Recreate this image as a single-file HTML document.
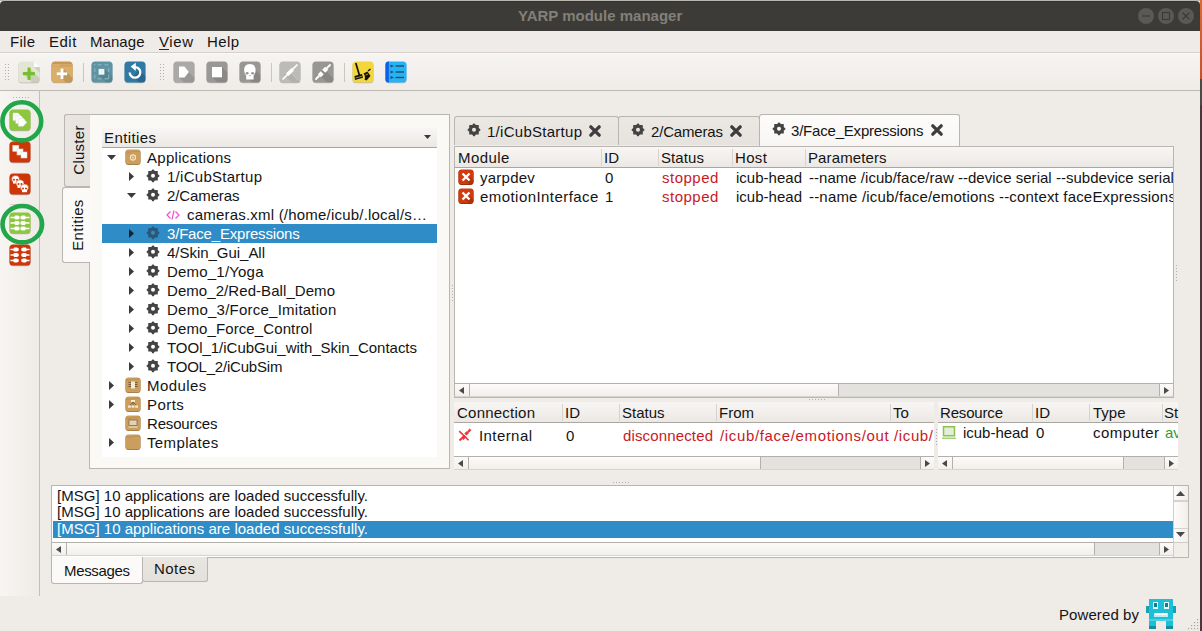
<!DOCTYPE html>
<html><head><meta charset="utf-8"><style>
html,body{margin:0;padding:0;width:1202px;height:631px;overflow:hidden;}
body{position:relative;font-family:"Liberation Sans",sans-serif;}
.t{position:absolute;white-space:nowrap;}
svg{overflow:visible}
</style></head><body>
<div style="position:absolute;left:0px;top:0px;width:1202px;height:631px;background:#efebe7"></div>
<div style="position:absolute;left:1200px;top:0px;width:2px;height:79px;background:linear-gradient(#e0692f,#c4522a)"></div>
<div style="position:absolute;left:1200px;top:79px;width:2px;height:26px;background:#4b4944"></div>
<div style="position:absolute;left:1200px;top:105px;width:2px;height:526px;background:#4c363d"></div>
<div style="position:absolute;left:0px;top:0px;width:1200px;height:1px;background:#bab7b2"></div>
<div style="position:absolute;left:0;top:1px;width:1200px;height:30px;background:#3c3b37;border-radius:4px 4px 0 0;"></div>
<div style="position:absolute;left:5px;top:1px;width:1190px;height:1px;background:#353430"></div>
<div class="t" style="left:518px;top:8px;font-size:15px;line-height:15px;color:#838079;font-weight:bold;">YARP module manager</div>
<svg style="position:absolute;left:1138px;top:8px" width="62" height="16" viewBox="0 0 62 16">
<circle cx="8" cy="8" r="8" fill="#5a5955"/><line x1="4" y1="8" x2="12" y2="8" stroke="#3c3b37" stroke-width="1.2"/>
<circle cx="28" cy="8" r="8" fill="#5a5955"/><rect x="24.5" y="4.5" width="7" height="7" fill="none" stroke="#3c3b37" stroke-width="1.2"/>
<circle cx="48" cy="8" r="8" fill="#5a5955"/><path d="M44.5 4.5 L51.5 11.5 M51.5 4.5 L44.5 11.5" stroke="#3c3b37" stroke-width="1.2"/>
</svg>
<div style="position:absolute;left:0px;top:31px;width:1200px;height:21px;background:#eeebe8"></div>
<div style="position:absolute;left:0px;top:52px;width:1200px;height:1px;background:#d5d1cc"></div>
<div style="position:absolute;left:0px;top:53px;width:1200px;height:1px;background:#fbf9f6"></div>
<div class="t" style="left:10px;top:34px;font-size:15px;line-height:15px;color:#141414;font-weight:normal;letter-spacing:0.281px;">File</div>
<div class="t" style="left:49px;top:34px;font-size:15px;line-height:15px;color:#141414;font-weight:normal;letter-spacing:0.485px;">Edit</div>
<div class="t" style="left:90px;top:34px;font-size:15px;line-height:15px;color:#141414;font-weight:normal;letter-spacing:0.056px;">Manage</div>
<div class="t" style="left:159px;top:34px;font-size:15px;line-height:15px;color:#141414;font-weight:normal;letter-spacing:0.589px;">View</div>
<div class="t" style="left:207px;top:34px;font-size:15px;line-height:15px;color:#141414;font-weight:normal;letter-spacing:0.452px;">Help</div>
<div style="position:absolute;left:159px;top:49px;width:10px;height:1px;background:#2b2b2b"></div>
<div style="position:absolute;left:0px;top:54px;width:1200px;height:36px;background:linear-gradient(#f6f4f1,#efece8)"></div>
<div style="position:absolute;left:0px;top:90px;width:1200px;height:1px;background:#bdb9b4"></div>
<svg style="position:absolute;left:5px;top:64px" width="6" height="18" viewBox="0 0 6 18"><rect x="0" y="0" width="1" height="1" fill="#b3afaa"/><rect x="0" y="3" width="1" height="1" fill="#b3afaa"/><rect x="0" y="6" width="1" height="1" fill="#b3afaa"/><rect x="0" y="9" width="1" height="1" fill="#b3afaa"/><rect x="0" y="12" width="1" height="1" fill="#b3afaa"/><rect x="0" y="15" width="1" height="1" fill="#b3afaa"/><rect x="3" y="0" width="1" height="1" fill="#b3afaa"/><rect x="3" y="3" width="1" height="1" fill="#b3afaa"/><rect x="3" y="6" width="1" height="1" fill="#b3afaa"/><rect x="3" y="9" width="1" height="1" fill="#b3afaa"/><rect x="3" y="12" width="1" height="1" fill="#b3afaa"/><rect x="3" y="15" width="1" height="1" fill="#b3afaa"/></svg>
<svg style="position:absolute;left:160px;top:64px" width="6" height="18" viewBox="0 0 6 18"><rect x="0" y="0" width="1" height="1" fill="#b3afaa"/><rect x="0" y="3" width="1" height="1" fill="#b3afaa"/><rect x="0" y="6" width="1" height="1" fill="#b3afaa"/><rect x="0" y="9" width="1" height="1" fill="#b3afaa"/><rect x="0" y="12" width="1" height="1" fill="#b3afaa"/><rect x="0" y="15" width="1" height="1" fill="#b3afaa"/><rect x="3" y="0" width="1" height="1" fill="#b3afaa"/><rect x="3" y="3" width="1" height="1" fill="#b3afaa"/><rect x="3" y="6" width="1" height="1" fill="#b3afaa"/><rect x="3" y="9" width="1" height="1" fill="#b3afaa"/><rect x="3" y="12" width="1" height="1" fill="#b3afaa"/><rect x="3" y="15" width="1" height="1" fill="#b3afaa"/></svg>
<div style="position:absolute;left:83px;top:63px;width:1px;height:19px;background:#c9c5c0"></div>
<div style="position:absolute;left:271px;top:63px;width:1px;height:19px;background:#c9c5c0"></div>
<div style="position:absolute;left:344px;top:63px;width:1px;height:19px;background:#c9c5c0"></div>
<svg style="position:absolute;left:18px;top:61px" width="22" height="22" viewBox="0 0 22 22"><path d="M3.5 1.2 H16 L21.5 6.7 V19.2 Q21.5 22.2 18.5 22.2 H3.5 Q0.5 22.2 0.5 19.2 V4.2 Q0.5 1.2 3.5 1.2Z" fill="#000" opacity="0.22"/><path d="M3.5 0.5 H16 L21.5 6 V18.5 Q21.5 21.5 18.5 21.5 H3.5 Q0.5 21.5 0.5 18.5 V3.5 Q0.5 0.5 3.5 0.5Z" fill="#e3e6d3"/><path d="M16 0.5 L21.5 6 H16Z" fill="#fdfdfb"/><path d="M16 6 H21.5 V11.5Z" fill="#000" opacity="0.1"/><path d="M12.5 8 L21.5 17 V18.5 Q21.5 21.5 18.5 21.5 H14 L6 13.5 Z" fill="#000" opacity="0.1"/><rect x="9.5" y="6.5" width="3.1" height="12.4" rx="1" fill="#74bf2e"/><rect x="4.8" y="11.1" width="12.2" height="3.1" rx="1" fill="#74bf2e"/></svg>
<svg style="position:absolute;left:51px;top:61px" width="22" height="22" viewBox="0 0 22 22"><rect x="0.5" y="1.2" width="21" height="21" rx="3.5" fill="#000" opacity="0.22"/><rect x="0.5" y="0.5" width="21" height="21" rx="3.5" fill="#c79650"/><path d="M0.5 4 Q0.5 3 3.5 3 H21.5 V18.5 Q21.5 21.5 18.5 21.5 H3.5 Q0.5 21.5 0.5 18.5Z" fill="#d9ad6a"/><path d="M0.5 5 H8 L9.5 3.8 H21.5 V5.5 H0.5Z" fill="#c89a55" opacity="0.6"/><path d="M13 8.5 L21.5 17 V18.5 Q21.5 21.5 18.5 21.5 H15 L7 13.5Z" fill="#000" opacity="0.12"/><rect x="9.6" y="7.6" width="2.8" height="10.4" fill="#fff"/><rect x="5.8" y="11.4" width="10.4" height="2.8" fill="#fff"/></svg>
<svg style="position:absolute;left:91px;top:61px" width="22" height="22" viewBox="0 0 22 22"><rect x="0.5" y="1.2" width="21" height="21" rx="3.5" fill="#000" opacity="0.22"/><rect x="0.5" y="0.5" width="21" height="21" rx="3.5" fill="#5d93a2"/><path d="M13 7.5 L21.5 16 V18.5 Q21.5 21.5 18.5 21.5 H15.5 L7.5 13.5Z" fill="#000" opacity="0.1"/><g fill="#86b3c0" opacity="0.8"><rect x="3" y="3" width="1.5" height="1.5"/><rect x="6.5" y="3" width="4" height="1.5"/><rect x="13.5" y="3" width="4" height="1.5"/><rect x="3" y="7" width="1.5" height="4"/><rect x="3" y="13.5" width="1.5" height="4"/><rect x="17" y="7" width="1.5" height="4"/><rect x="17" y="13.5" width="1.5" height="4"/><rect x="6.5" y="17" width="4" height="1.5"/><rect x="13.5" y="17" width="4" height="1.5"/></g><rect x="7.6" y="7.9" width="5.8" height="5.8" fill="#eef4f6"/></svg>
<svg style="position:absolute;left:124px;top:61px" width="22" height="22" viewBox="0 0 22 22"><rect x="0.5" y="1.2" width="21" height="21" rx="3.5" fill="#000" opacity="0.22"/><rect x="0.5" y="0.5" width="21" height="21" rx="3.5" fill="#2f7ba5"/><path d="M15 9 L21.5 15.5 V18.5 Q21.5 21.5 18.5 21.5 H15 L9 15.5Z" fill="#000" opacity="0.15"/><path d="M5.7 11.4 A5.3 5.3 0 1 0 11 6.1" fill="none" stroke="#fff" stroke-width="2.3"/><path d="M11.8 1.8 L11.8 10 L6.6 5.5Z" fill="#fff"/></svg>
<svg style="position:absolute;left:173px;top:61px" width="22" height="22" viewBox="0 0 22 22"><rect x="0.5" y="1.2" width="21" height="21" rx="3.5" fill="#000" opacity="0.22"/><rect x="0.5" y="0.5" width="21" height="21" rx="3.5" fill="#aba9a6"/><path d="M11.5 16.6 L15.8 11 L21.5 16.7 V18.5 Q21.5 21.5 18.5 21.5 H16.4Z M6 16.6 H11.5 L16.4 21.5 H10.9Z" fill="#000" opacity="0.1"/><path d="M6 5.6 H11.5 L15.8 11 L11.5 16.6 H6Z" fill="#fff"/></svg>
<svg style="position:absolute;left:206px;top:61px" width="22" height="22" viewBox="0 0 22 22"><rect x="0.5" y="1.2" width="21" height="21" rx="3.5" fill="#000" opacity="0.22"/><rect x="0.5" y="0.5" width="21" height="21" rx="3.5" fill="#9a9895"/><path d="M16 6 L21.5 11.5 V18.5 Q21.5 21.5 18.5 21.5 H11.5 L6 16 H16Z" fill="#000" opacity="0.1"/><rect x="6" y="6" width="10" height="10.3" fill="#fff"/></svg>
<svg style="position:absolute;left:239px;top:61px" width="22" height="22" viewBox="0 0 22 22"><rect x="0.5" y="1.2" width="21" height="21" rx="3.5" fill="#000" opacity="0.22"/><rect x="0.5" y="0.5" width="21" height="21" rx="3.5" fill="#999793"/><path d="M16.6 9 L21.5 14 V18.5 Q21.5 21.5 18.5 21.5 H13 L10 18.6 L14 15Z" fill="#000" opacity="0.1"/><path d="M10.9 3.1 C6.8 3.1 5.2 6 5.2 9.3 C5.2 11.6 6 13.4 7.2 14.6 V18.2 Q7.2 18.6 7.8 18.6 H14 Q14.6 18.6 14.6 18.2 V14.6 C15.8 13.4 16.6 11.6 16.6 9.3 C16.6 6 15 3.1 10.9 3.1Z" fill="#fff"/><ellipse cx="8.1" cy="12.3" rx="1.5" ry="1.3" fill="#999793"/><ellipse cx="13.6" cy="12.3" rx="1.5" ry="1.3" fill="#999793"/><circle cx="10.9" cy="14.6" r="0.7" fill="#999793"/></svg>
<svg style="position:absolute;left:279px;top:61px" width="22" height="22" viewBox="0 0 22 22"><rect x="0.5" y="1.2" width="21" height="21" rx="3.5" fill="#000" opacity="0.22"/><rect x="0.5" y="0.5" width="21" height="21" rx="3.5" fill="#bdbbb8"/><path d="M11 11 L21.5 21.5 H13 L5 13.5Z" fill="#000" opacity="0.06"/><path d="M11 11 L19.5 19.5" stroke="#d2d0cd" stroke-width="0.6"/><path d="M4 18 L8.2 13.8 M13.8 8.2 L18 4" stroke="#fff" stroke-width="1.7" stroke-linecap="round"/><path d="M7 12.5 L12.5 7 L15 9.5 L9.5 15Z" fill="#fff"/><path d="M11 11" stroke="#bdbbb8"/></svg>
<svg style="position:absolute;left:312px;top:61px" width="22" height="22" viewBox="0 0 22 22"><rect x="0.5" y="1.2" width="21" height="21" rx="3.5" fill="#000" opacity="0.22"/><rect x="0.5" y="0.5" width="21" height="21" rx="3.5" fill="#999794"/><path d="M13 9 L21.5 17.5 V18.5 Q21.5 21.5 18.5 21.5 H15 L6 12.5Z" fill="#000" opacity="0.1"/><path d="M4 18 L7 15 M15 7 L18 4" stroke="#fff" stroke-width="1.8" stroke-linecap="round"/><path d="M5.8 13.2 L8.8 10.2 L11.8 13.2 L8.8 16.2Z" fill="#fff"/><path d="M10.2 8.8 L13.2 5.8 L16.2 8.8 L13.2 11.8Z" fill="#fff"/></svg>
<svg style="position:absolute;left:352px;top:61px" width="22" height="22" viewBox="0 0 22 22"><rect x="0.5" y="1.2" width="21" height="21" rx="3.5" fill="#000" opacity="0.22"/><rect x="0.5" y="0.5" width="21" height="21" rx="3.5" fill="#f3d63c"/><path d="M3.8 2 L7.5 14.5" stroke="#111" stroke-width="1.7"/><path d="M2.5 15 L10 13 L11 16.8 L3 19Z" fill="#111"/><path d="M3.5 17 L10.3 15.2" stroke="#f3d63c" stroke-width="0.6"/><path d="M11.5 12.5 L15.5 10.5 L18.5 15 L14.5 19.5 L12.5 18.5 C13.5 17 13 14.5 11.5 12.5Z" fill="#111"/><path d="M16 10 L18.5 8" stroke="#111" stroke-width="1.5"/><path d="M13.5 14 L16 13" stroke="#f3d63c" stroke-width="0.7"/></svg>
<svg style="position:absolute;left:385px;top:61px" width="22" height="22" viewBox="0 0 22 22"><rect x="0.5" y="1.2" width="21" height="21" rx="3.5" fill="#000" opacity="0.22"/><rect x="0.5" y="0.5" width="21" height="21" rx="3.5" fill="#27b2f5"/><path d="M3.5 0.5 H3.8 V21.5 H3.5 Q0.5 21.5 0.5 18.5 V3.5 Q0.5 0.5 3.5 0.5Z" fill="#0a5ef0"/><path d="M5.5 3.6 L9 5 L5.5 6.4Z M5.5 9.6 L9 11 L5.5 12.4Z M5.5 15.1 L9 16.5 L5.5 17.9Z" fill="#1f4f66"/><rect x="10.5" y="4.3" width="8.5" height="1.4" fill="#1f4f66"/><rect x="10.5" y="10.3" width="8.5" height="1.4" fill="#1f4f66"/><rect x="10.5" y="15.8" width="8.5" height="1.4" fill="#1f4f66"/></svg>
<div style="position:absolute;left:0px;top:91px;width:39px;height:505px;background:linear-gradient(90deg,#f7f5f2,#efebe7)"></div>
<div style="position:absolute;left:39px;top:91px;width:1px;height:505px;background:#c2beb9"></div>
<svg style="position:absolute;left:13px;top:97px" width="18" height="3" viewBox="0 0 18 3"><rect x="0" y="0" width="1" height="1" fill="#b3afaa"/><rect x="3" y="0" width="1" height="1" fill="#b3afaa"/><rect x="6" y="0" width="1" height="1" fill="#b3afaa"/><rect x="9" y="0" width="1" height="1" fill="#b3afaa"/><rect x="12" y="0" width="1" height="1" fill="#b3afaa"/><rect x="15" y="0" width="1" height="1" fill="#b3afaa"/></svg>
<svg style="position:absolute;left:9px;top:109px" width="22" height="22" viewBox="0 0 22 22"><rect x="0.5" y="1.2" width="21" height="21" rx="3.5" fill="#000" opacity="0.25"/><rect x="0.5" y="0.5" width="21" height="21" rx="3.5" fill="#8dc63f"/><path d="M4 4 H9 L12.5 7.8 L9 11.6 H4Z" fill="#fff" stroke="#dcdcdc" stroke-width="0.6"/><path d="M6.8 6.8 H11.8 L15.3 10.6 L11.8 14.399999999999999 H6.8Z" fill="#fff" stroke="#dcdcdc" stroke-width="0.6"/><path d="M9.3 9.6 H14.3 L17.8 13.399999999999999 L14.3 17.2 H9.3Z" fill="#fff" stroke="#dcdcdc" stroke-width="0.6"/></svg>
<svg style="position:absolute;left:9px;top:141px" width="22" height="22" viewBox="0 0 22 22"><rect x="0.5" y="1.2" width="21" height="21" rx="3.5" fill="#000" opacity="0.25"/><rect x="0.5" y="0.5" width="21" height="21" rx="3.5" fill="#cc3608"/><rect x="3.8" y="4.3" width="6" height="6" fill="#fff" stroke="#d8d8d8" stroke-width="0.6"/><rect x="8" y="8" width="6" height="6" fill="#fff" stroke="#d8d8d8" stroke-width="0.6"/><rect x="12" y="11" width="6" height="6" fill="#fff" stroke="#d8d8d8" stroke-width="0.6"/></svg>
<svg style="position:absolute;left:9px;top:173px" width="22" height="22" viewBox="0 0 22 22"><rect x="0.5" y="1.2" width="21" height="21" rx="3.5" fill="#000" opacity="0.25"/><rect x="0.5" y="0.5" width="21" height="21" rx="3.5" fill="#cc3608"/><ellipse cx="6.5" cy="6" rx="4" ry="3.5" fill="#fff" stroke="#cc3608" stroke-width="0.5"/><rect x="4.0" y="7.8" width="5" height="2.8" fill="#fff"/><circle cx="5.0" cy="6.8" r="1" fill="#cc3608"/><circle cx="8.0" cy="6.8" r="1" fill="#cc3608"/><ellipse cx="11" cy="10.3" rx="4" ry="3.5" fill="#fff" stroke="#cc3608" stroke-width="0.5"/><rect x="8.5" y="12.100000000000001" width="5" height="2.8" fill="#fff"/><circle cx="9.5" cy="11.100000000000001" r="1" fill="#cc3608"/><circle cx="12.5" cy="11.100000000000001" r="1" fill="#cc3608"/><ellipse cx="15.5" cy="14.6" rx="4" ry="3.5" fill="#fff" stroke="#cc3608" stroke-width="0.5"/><rect x="13.0" y="16.4" width="5" height="2.8" fill="#fff"/><circle cx="14.0" cy="15.4" r="1" fill="#cc3608"/><circle cx="17.0" cy="15.4" r="1" fill="#cc3608"/></svg>
<div style="position:absolute;left:10px;top:204px;width:20px;height:1px;background:#d4d0cb"></div>
<svg style="position:absolute;left:9px;top:212px" width="22" height="22" viewBox="0 0 22 22"><rect x="0.5" y="1.2" width="21" height="21" rx="3.5" fill="#000" opacity="0.25"/><rect x="0.5" y="0.5" width="21" height="21" rx="3.5" fill="#8dc63f"/><path d="M1.5 5.5 H6" stroke="#fff" stroke-width="1.5"/><rect x="5.5" y="3.5" width="4.5" height="4" rx="1.2" fill="#fff"/><rect x="9.5" y="4.2" width="1" height="2.6" fill="#fff"/><rect x="11.5" y="4.2" width="1" height="2.6" fill="#fff"/><rect x="12" y="3.5" width="4.5" height="4" rx="1.2" fill="#fff"/><path d="M16 5.5 H20.5" stroke="#fff" stroke-width="1.5"/><path d="M1.5 11 H6" stroke="#fff" stroke-width="1.5"/><rect x="5.5" y="9" width="4.5" height="4" rx="1.2" fill="#fff"/><rect x="9.5" y="9.7" width="1" height="2.6" fill="#fff"/><rect x="11.5" y="9.7" width="1" height="2.6" fill="#fff"/><rect x="12" y="9" width="4.5" height="4" rx="1.2" fill="#fff"/><path d="M16 11 H20.5" stroke="#fff" stroke-width="1.5"/><path d="M1.5 16.5 H6" stroke="#fff" stroke-width="1.5"/><rect x="5.5" y="14.5" width="4.5" height="4" rx="1.2" fill="#fff"/><rect x="9.5" y="15.2" width="1" height="2.6" fill="#fff"/><rect x="11.5" y="15.2" width="1" height="2.6" fill="#fff"/><rect x="12" y="14.5" width="4.5" height="4" rx="1.2" fill="#fff"/><path d="M16 16.5 H20.5" stroke="#fff" stroke-width="1.5"/></svg>
<svg style="position:absolute;left:9px;top:244px" width="22" height="22" viewBox="0 0 22 22"><rect x="0.5" y="1.2" width="21" height="21" rx="3.5" fill="#000" opacity="0.25"/><rect x="0.5" y="0.5" width="21" height="21" rx="3.5" fill="#cc3608"/><path d="M1.5 5.5 H5" stroke="#fff" stroke-width="1.5"/><rect x="4.5" y="3.5" width="4.5" height="4" rx="1.2" fill="#fff"/><rect x="8.5" y="4.2" width="1.2" height="2.6" fill="#fff"/><rect x="12.3" y="4.2" width="1.2" height="2.6" fill="#fff"/><rect x="13" y="3.5" width="4.5" height="4" rx="1.2" fill="#fff"/><path d="M17 5.5 H20.5" stroke="#fff" stroke-width="1.5"/><path d="M1.5 11 H5" stroke="#fff" stroke-width="1.5"/><rect x="4.5" y="9" width="4.5" height="4" rx="1.2" fill="#fff"/><rect x="8.5" y="9.7" width="1.2" height="2.6" fill="#fff"/><rect x="12.3" y="9.7" width="1.2" height="2.6" fill="#fff"/><rect x="13" y="9" width="4.5" height="4" rx="1.2" fill="#fff"/><path d="M17 11 H20.5" stroke="#fff" stroke-width="1.5"/><path d="M1.5 16.5 H5" stroke="#fff" stroke-width="1.5"/><rect x="4.5" y="14.5" width="4.5" height="4" rx="1.2" fill="#fff"/><rect x="8.5" y="15.2" width="1.2" height="2.6" fill="#fff"/><rect x="12.3" y="15.2" width="1.2" height="2.6" fill="#fff"/><rect x="13" y="14.5" width="4.5" height="4" rx="1.2" fill="#fff"/><path d="M17 16.5 H20.5" stroke="#fff" stroke-width="1.5"/></svg>
<svg style="position:absolute;left:0px;top:98px" width="46" height="46" viewBox="0 0 46 46"><ellipse cx="21.8" cy="23.3" rx="19.4" ry="19.1" fill="none" stroke="#22a64a" stroke-width="4.6"/></svg>
<svg style="position:absolute;left:0px;top:201px" width="46" height="46" viewBox="0 0 46 46"><ellipse cx="22.3" cy="23.2" rx="19.8" ry="18.2" fill="none" stroke="#22a64a" stroke-width="4.6"/></svg>
<div style="position:absolute;left:89px;top:114px;width:361px;height:355px;background:#fbf9f6;border:1px solid #b9b5b0;box-sizing:border-box"></div>
<div style="position:absolute;left:64px;top:114px;width:26px;height:73px;background:linear-gradient(90deg,#e9e6e2,#e6e3df);border:1px solid #b9b5b0;border-right:none;border-radius:3px 0 0 3px;box-sizing:border-box"></div>
<div style="position:absolute;left:62px;top:187px;width:28px;height:76px;background:#fbfaf8;border:1px solid #b9b5b0;border-right:none;border-radius:3px 0 0 3px;box-sizing:border-box"></div>
<div style="position:absolute;left:89px;top:188px;width:1px;height:74px;background:#fbfaf8"></div>
<div class="t" style="left:77.5px;top:150px;font-size:15px;line-height:15px;letter-spacing:0.25px;color:#141414;transform:translate(-50%,-50%) rotate(-90deg);white-space:nowrap">Cluster</div>
<div class="t" style="left:77px;top:224.5px;font-size:15px;line-height:15px;letter-spacing:0.26px;color:#141414;transform:translate(-50%,-50%) rotate(-90deg);white-space:nowrap">Entities</div>
<div style="position:absolute;left:102px;top:128px;width:335px;height:19px;background:linear-gradient(#f8f6f4,#ebe8e4)"></div>
<div style="position:absolute;left:102px;top:147px;width:335px;height:1px;background:#aaa6a1"></div>
<div class="t" style="left:104px;top:130px;font-size:15px;line-height:15px;color:#141414;font-weight:normal;letter-spacing:0.402px;">Entities</div>
<svg style="position:absolute;left:424px;top:135px" width="7" height="4" viewBox="0 0 7 4"><path d="M0 0 H7 L3.5 4Z" fill="#3a3a3a"/></svg>
<div style="position:absolute;left:102px;top:148px;width:335px;height:309px;background:#fff"></div>
<svg style="position:absolute;left:107px;top:155px" width="9" height="5" viewBox="0 0 9 5"><path d="M0 0 H9 L4.5 5Z" fill="#3b3b3b"/></svg>
<svg style="position:absolute;left:125px;top:149px" width="16" height="16" viewBox="0 0 16 16"><rect x="0.5" y="1" width="15" height="15" rx="3" fill="#9b7440"/><rect x="0.5" y="0.5" width="15" height="14.8" rx="3" fill="#cc9e5e"/><path d="M1 3.2 H6 L7 2.2 H15" fill="none" stroke="#b98a4c" stroke-width="0.8"/><circle cx="8" cy="8.5" r="2.6" fill="none" stroke="#f3e6d0" stroke-width="1.1"/><circle cx="8" cy="8.5" r="0.9" fill="#f3e6d0"/></svg>
<div class="t" style="left:147px;top:150px;font-size:15px;line-height:15px;color:#141414;font-weight:normal;letter-spacing:0.284px;">Applications</div>
<svg style="position:absolute;left:129px;top:172px" width="5" height="9" viewBox="0 0 5 9"><path d="M0 0 L5 4.5 L0 9Z" fill="#3b3b3b"/></svg>
<svg style="position:absolute;left:146px;top:169px" width="14" height="14" viewBox="0 0 14 14"><polygon points="7.00,0.80 8.72,2.64 11.24,2.56 11.16,5.08 13.00,6.80 11.16,8.52 11.24,11.04 8.72,10.96 7.00,12.80 5.28,10.96 2.76,11.04 2.84,8.52 1.00,6.80 2.84,5.08 2.76,2.56 5.28,2.64" fill="#444" stroke="#444" stroke-width="1.1" stroke-linejoin="round"/><circle cx="7" cy="6.8" r="2" fill="#fff"/></svg>
<div class="t" style="left:167px;top:169px;font-size:15px;line-height:15px;color:#141414;font-weight:normal;letter-spacing:0.272px;">1/iCubStartup</div>
<svg style="position:absolute;left:127px;top:193px" width="9" height="5" viewBox="0 0 9 5"><path d="M0 0 H9 L4.5 5Z" fill="#3b3b3b"/></svg>
<svg style="position:absolute;left:146px;top:188px" width="14" height="14" viewBox="0 0 14 14"><polygon points="7.00,0.80 8.72,2.64 11.24,2.56 11.16,5.08 13.00,6.80 11.16,8.52 11.24,11.04 8.72,10.96 7.00,12.80 5.28,10.96 2.76,11.04 2.84,8.52 1.00,6.80 2.84,5.08 2.76,2.56 5.28,2.64" fill="#444" stroke="#444" stroke-width="1.1" stroke-linejoin="round"/><circle cx="7" cy="6.8" r="2" fill="#fff"/></svg>
<div class="t" style="left:167px;top:188px;font-size:15px;line-height:15px;color:#141414;font-weight:normal;letter-spacing:-0.109px;">2/Cameras</div>
<svg style="position:absolute;left:166px;top:210px" width="14" height="10" viewBox="0 0 14 10"><path d="M4.5 1.5 L1 5 L4.5 8.5 M9.5 1.5 L13 5 L9.5 8.5 M8 0.5 L6 9.5" fill="none" stroke="#f050d0" stroke-width="1.2"/></svg>
<div class="t" style="left:187px;top:207px;font-size:15px;line-height:15px;color:#141414;font-weight:normal;letter-spacing:0.205px;">cameras.xml (/home/icub/.local/s…</div>
<div style="position:absolute;left:102px;top:224px;width:335px;height:19px;background:#308cc6"></div>
<svg style="position:absolute;left:129px;top:229px" width="5" height="9" viewBox="0 0 5 9"><path d="M0 0 L5 4.5 L0 9Z" fill="#0f2433"/></svg>
<svg style="position:absolute;left:146px;top:226px" width="14" height="14" viewBox="0 0 14 14"><polygon points="7.00,0.80 8.72,2.64 11.24,2.56 11.16,5.08 13.00,6.80 11.16,8.52 11.24,11.04 8.72,10.96 7.00,12.80 5.28,10.96 2.76,11.04 2.84,8.52 1.00,6.80 2.84,5.08 2.76,2.56 5.28,2.64" fill="#2c5877" stroke="#2c5877" stroke-width="1.1" stroke-linejoin="round"/><circle cx="7" cy="6.8" r="2" fill="#308cc6"/></svg>
<div class="t" style="left:167px;top:226px;font-size:15px;line-height:15px;color:#fff;font-weight:normal;letter-spacing:-0.189px;">3/Face_Expressions</div>
<svg style="position:absolute;left:129px;top:248px" width="5" height="9" viewBox="0 0 5 9"><path d="M0 0 L5 4.5 L0 9Z" fill="#3b3b3b"/></svg>
<svg style="position:absolute;left:146px;top:245px" width="14" height="14" viewBox="0 0 14 14"><polygon points="7.00,0.80 8.72,2.64 11.24,2.56 11.16,5.08 13.00,6.80 11.16,8.52 11.24,11.04 8.72,10.96 7.00,12.80 5.28,10.96 2.76,11.04 2.84,8.52 1.00,6.80 2.84,5.08 2.76,2.56 5.28,2.64" fill="#444" stroke="#444" stroke-width="1.1" stroke-linejoin="round"/><circle cx="7" cy="6.8" r="2" fill="#fff"/></svg>
<div class="t" style="left:167px;top:245px;font-size:15px;line-height:15px;color:#141414;font-weight:normal;letter-spacing:-0.029px;">4/Skin_Gui_All</div>
<svg style="position:absolute;left:129px;top:267px" width="5" height="9" viewBox="0 0 5 9"><path d="M0 0 L5 4.5 L0 9Z" fill="#3b3b3b"/></svg>
<svg style="position:absolute;left:146px;top:264px" width="14" height="14" viewBox="0 0 14 14"><polygon points="7.00,0.80 8.72,2.64 11.24,2.56 11.16,5.08 13.00,6.80 11.16,8.52 11.24,11.04 8.72,10.96 7.00,12.80 5.28,10.96 2.76,11.04 2.84,8.52 1.00,6.80 2.84,5.08 2.76,2.56 5.28,2.64" fill="#444" stroke="#444" stroke-width="1.1" stroke-linejoin="round"/><circle cx="7" cy="6.8" r="2" fill="#fff"/></svg>
<div class="t" style="left:167px;top:264px;font-size:15px;line-height:15px;color:#141414;font-weight:normal;letter-spacing:0.197px;">Demo_1/Yoga</div>
<svg style="position:absolute;left:129px;top:286px" width="5" height="9" viewBox="0 0 5 9"><path d="M0 0 L5 4.5 L0 9Z" fill="#3b3b3b"/></svg>
<svg style="position:absolute;left:146px;top:283px" width="14" height="14" viewBox="0 0 14 14"><polygon points="7.00,0.80 8.72,2.64 11.24,2.56 11.16,5.08 13.00,6.80 11.16,8.52 11.24,11.04 8.72,10.96 7.00,12.80 5.28,10.96 2.76,11.04 2.84,8.52 1.00,6.80 2.84,5.08 2.76,2.56 5.28,2.64" fill="#444" stroke="#444" stroke-width="1.1" stroke-linejoin="round"/><circle cx="7" cy="6.8" r="2" fill="#fff"/></svg>
<div class="t" style="left:167px;top:283px;font-size:15px;line-height:15px;color:#141414;font-weight:normal;letter-spacing:0.066px;">Demo_2/Red-Ball_Demo</div>
<svg style="position:absolute;left:129px;top:305px" width="5" height="9" viewBox="0 0 5 9"><path d="M0 0 L5 4.5 L0 9Z" fill="#3b3b3b"/></svg>
<svg style="position:absolute;left:146px;top:302px" width="14" height="14" viewBox="0 0 14 14"><polygon points="7.00,0.80 8.72,2.64 11.24,2.56 11.16,5.08 13.00,6.80 11.16,8.52 11.24,11.04 8.72,10.96 7.00,12.80 5.28,10.96 2.76,11.04 2.84,8.52 1.00,6.80 2.84,5.08 2.76,2.56 5.28,2.64" fill="#444" stroke="#444" stroke-width="1.1" stroke-linejoin="round"/><circle cx="7" cy="6.8" r="2" fill="#fff"/></svg>
<div class="t" style="left:167px;top:302px;font-size:15px;line-height:15px;color:#141414;font-weight:normal;letter-spacing:0.240px;">Demo_3/Force_Imitation</div>
<svg style="position:absolute;left:129px;top:324px" width="5" height="9" viewBox="0 0 5 9"><path d="M0 0 L5 4.5 L0 9Z" fill="#3b3b3b"/></svg>
<svg style="position:absolute;left:146px;top:321px" width="14" height="14" viewBox="0 0 14 14"><polygon points="7.00,0.80 8.72,2.64 11.24,2.56 11.16,5.08 13.00,6.80 11.16,8.52 11.24,11.04 8.72,10.96 7.00,12.80 5.28,10.96 2.76,11.04 2.84,8.52 1.00,6.80 2.84,5.08 2.76,2.56 5.28,2.64" fill="#444" stroke="#444" stroke-width="1.1" stroke-linejoin="round"/><circle cx="7" cy="6.8" r="2" fill="#fff"/></svg>
<div class="t" style="left:167px;top:321px;font-size:15px;line-height:15px;color:#141414;font-weight:normal;letter-spacing:0.111px;">Demo_Force_Control</div>
<svg style="position:absolute;left:129px;top:343px" width="5" height="9" viewBox="0 0 5 9"><path d="M0 0 L5 4.5 L0 9Z" fill="#3b3b3b"/></svg>
<svg style="position:absolute;left:146px;top:340px" width="14" height="14" viewBox="0 0 14 14"><polygon points="7.00,0.80 8.72,2.64 11.24,2.56 11.16,5.08 13.00,6.80 11.16,8.52 11.24,11.04 8.72,10.96 7.00,12.80 5.28,10.96 2.76,11.04 2.84,8.52 1.00,6.80 2.84,5.08 2.76,2.56 5.28,2.64" fill="#444" stroke="#444" stroke-width="1.1" stroke-linejoin="round"/><circle cx="7" cy="6.8" r="2" fill="#fff"/></svg>
<div class="t" style="left:167px;top:340px;font-size:15px;line-height:15px;color:#141414;font-weight:normal;letter-spacing:-0.021px;">TOOl_1/iCubGui_with_Skin_Contacts</div>
<svg style="position:absolute;left:129px;top:362px" width="5" height="9" viewBox="0 0 5 9"><path d="M0 0 L5 4.5 L0 9Z" fill="#3b3b3b"/></svg>
<svg style="position:absolute;left:146px;top:359px" width="14" height="14" viewBox="0 0 14 14"><polygon points="7.00,0.80 8.72,2.64 11.24,2.56 11.16,5.08 13.00,6.80 11.16,8.52 11.24,11.04 8.72,10.96 7.00,12.80 5.28,10.96 2.76,11.04 2.84,8.52 1.00,6.80 2.84,5.08 2.76,2.56 5.28,2.64" fill="#444" stroke="#444" stroke-width="1.1" stroke-linejoin="round"/><circle cx="7" cy="6.8" r="2" fill="#fff"/></svg>
<div class="t" style="left:167px;top:359px;font-size:15px;line-height:15px;color:#141414;font-weight:normal;letter-spacing:-0.208px;">TOOL_2/iCubSim</div>
<svg style="position:absolute;left:109px;top:381px" width="5" height="9" viewBox="0 0 5 9"><path d="M0 0 L5 4.5 L0 9Z" fill="#3b3b3b"/></svg>
<svg style="position:absolute;left:125px;top:377px" width="16" height="16" viewBox="0 0 16 16"><rect x="0.5" y="1" width="15" height="15" rx="3" fill="#9b7440"/><rect x="0.5" y="0.5" width="15" height="14.8" rx="3" fill="#cc9e5e"/><path d="M1 3.2 H6 L7 2.2 H15" fill="none" stroke="#b98a4c" stroke-width="0.8"/><rect x="6" y="4.5" width="4" height="7" fill="#f4ead8"/><path d="M3.5 5.5 H6 M3.5 7.5 H6 M3.5 9.5 H6 M10 5.5 H12.5 M10 7.5 H12.5 M10 9.5 H12.5" stroke="#6b5232" stroke-width="0.9"/></svg>
<div class="t" style="left:147px;top:378px;font-size:15px;line-height:15px;color:#141414;font-weight:normal;letter-spacing:0.433px;">Modules</div>
<svg style="position:absolute;left:109px;top:400px" width="5" height="9" viewBox="0 0 5 9"><path d="M0 0 L5 4.5 L0 9Z" fill="#3b3b3b"/></svg>
<svg style="position:absolute;left:125px;top:396px" width="16" height="16" viewBox="0 0 16 16"><rect x="0.5" y="1" width="15" height="15" rx="3" fill="#9b7440"/><rect x="0.5" y="0.5" width="15" height="14.8" rx="3" fill="#cc9e5e"/><path d="M1 3.2 H6 L7 2.2 H15" fill="none" stroke="#b98a4c" stroke-width="0.8"/><rect x="6" y="4" width="4" height="2" fill="#f4ead8"/><path d="M8 6 L4.5 9.5 M8 6 L11.5 9.5 M8 6 V9.5" stroke="#6b5232" stroke-width="0.7"/><rect x="3" y="9.5" width="2.8" height="2.2" fill="#f4ead8"/><rect x="6.6" y="9.5" width="2.8" height="2.2" fill="#f4ead8"/><rect x="10.2" y="9.5" width="2.8" height="2.2" fill="#f4ead8"/></svg>
<div class="t" style="left:147px;top:397px;font-size:15px;line-height:15px;color:#141414;font-weight:normal;letter-spacing:0.446px;">Ports</div>
<svg style="position:absolute;left:125px;top:415px" width="16" height="16" viewBox="0 0 16 16"><rect x="0.5" y="1" width="15" height="15" rx="3" fill="#9b7440"/><rect x="0.5" y="0.5" width="15" height="14.8" rx="3" fill="#cc9e5e"/><path d="M1 3.2 H6 L7 2.2 H15" fill="none" stroke="#b98a4c" stroke-width="0.8"/><rect x="4" y="5" width="8" height="5.5" fill="#e2d2b4" stroke="#6b5232" stroke-width="0.6"/><rect x="3.5" y="11.5" width="9" height="1" fill="#f4ead8"/></svg>
<div class="t" style="left:147px;top:416px;font-size:15px;line-height:15px;color:#141414;font-weight:normal;letter-spacing:-0.163px;">Resources</div>
<svg style="position:absolute;left:109px;top:438px" width="5" height="9" viewBox="0 0 5 9"><path d="M0 0 L5 4.5 L0 9Z" fill="#3b3b3b"/></svg>
<svg style="position:absolute;left:125px;top:434px" width="16" height="16" viewBox="0 0 16 16"><rect x="0.5" y="1" width="15" height="15" rx="3" fill="#9b7440"/><rect x="0.5" y="0.5" width="15" height="14.8" rx="3" fill="#cc9e5e"/><path d="M1 3.2 H6 L7 2.2 H15" fill="none" stroke="#b98a4c" stroke-width="0.8"/></svg>
<div class="t" style="left:147px;top:435px;font-size:15px;line-height:15px;color:#141414;font-weight:normal;letter-spacing:0.366px;">Templates</div>
<div style="position:absolute;left:454px;top:116px;width:165px;height:29px;background:linear-gradient(#ebe8e4,#e6e3df);border:1px solid #b9b5b0;border-bottom:none;border-radius:3px 3px 0 0;box-sizing:border-box"></div>
<div style="position:absolute;left:618px;top:116px;width:142px;height:29px;background:linear-gradient(#ebe8e4,#e6e3df);border:1px solid #b9b5b0;border-bottom:none;border-radius:3px 3px 0 0;box-sizing:border-box"></div>
<div style="position:absolute;left:759px;top:114px;width:201px;height:33px;background:linear-gradient(#fdfcfb,#f8f6f3);border:1px solid #b9b5b0;border-bottom:none;border-radius:3px 3px 0 0;box-sizing:border-box"></div>
<svg style="position:absolute;left:467px;top:123px" width="14" height="14" viewBox="0 0 14 14"><polygon points="7.00,0.80 8.72,2.64 11.24,2.56 11.16,5.08 13.00,6.80 11.16,8.52 11.24,11.04 8.72,10.96 7.00,12.80 5.28,10.96 2.76,11.04 2.84,8.52 1.00,6.80 2.84,5.08 2.76,2.56 5.28,2.64" fill="#444" stroke="#444" stroke-width="1.1" stroke-linejoin="round"/><circle cx="7" cy="6.8" r="2" fill="#e9e6e2"/></svg>
<div class="t" style="left:487px;top:124px;font-size:15px;line-height:15px;color:#141414;font-weight:normal;letter-spacing:0.272px;">1/iCubStartup</div>
<svg style="position:absolute;left:589px;top:125px" width="12" height="12" viewBox="0 0 12 12"><path d="M1.8 1.8 L10.2 10.2 M10.2 1.8 L1.8 10.2" stroke="#3d3d3d" stroke-width="3.3" stroke-linecap="round"/><rect x="4" y="4" width="4" height="4" fill="#3d3d3d"/></svg>
<svg style="position:absolute;left:631px;top:123px" width="14" height="14" viewBox="0 0 14 14"><polygon points="7.00,0.80 8.72,2.64 11.24,2.56 11.16,5.08 13.00,6.80 11.16,8.52 11.24,11.04 8.72,10.96 7.00,12.80 5.28,10.96 2.76,11.04 2.84,8.52 1.00,6.80 2.84,5.08 2.76,2.56 5.28,2.64" fill="#444" stroke="#444" stroke-width="1.1" stroke-linejoin="round"/><circle cx="7" cy="6.8" r="2" fill="#e9e6e2"/></svg>
<div class="t" style="left:651px;top:124px;font-size:15px;line-height:15px;color:#141414;font-weight:normal;letter-spacing:-0.172px;">2/Cameras</div>
<svg style="position:absolute;left:730px;top:125px" width="12" height="12" viewBox="0 0 12 12"><path d="M1.8 1.8 L10.2 10.2 M10.2 1.8 L1.8 10.2" stroke="#3d3d3d" stroke-width="3.3" stroke-linecap="round"/><rect x="4" y="4" width="4" height="4" fill="#3d3d3d"/></svg>
<svg style="position:absolute;left:772px;top:122px" width="14" height="14" viewBox="0 0 14 14"><polygon points="7.00,0.80 8.72,2.64 11.24,2.56 11.16,5.08 13.00,6.80 11.16,8.52 11.24,11.04 8.72,10.96 7.00,12.80 5.28,10.96 2.76,11.04 2.84,8.52 1.00,6.80 2.84,5.08 2.76,2.56 5.28,2.64" fill="#444" stroke="#444" stroke-width="1.1" stroke-linejoin="round"/><circle cx="7" cy="6.8" r="2" fill="#fbfaf8"/></svg>
<div class="t" style="left:791px;top:123px;font-size:15px;line-height:15px;color:#141414;font-weight:normal;letter-spacing:-0.200px;">3/Face_Expressions</div>
<svg style="position:absolute;left:931px;top:124px" width="12" height="12" viewBox="0 0 12 12"><path d="M1.8 1.8 L10.2 10.2 M10.2 1.8 L1.8 10.2" stroke="#3d3d3d" stroke-width="3.3" stroke-linecap="round"/><rect x="4" y="4" width="4" height="4" fill="#3d3d3d"/></svg>
<div style="position:absolute;left:454px;top:146px;width:720px;height:252px;background:#fff;border:1px solid #b9b5b0;box-sizing:border-box"></div>
<div style="position:absolute;left:455px;top:147px;width:718px;height:20px;background:linear-gradient(#f8f6f4,#ebe8e4)"></div>
<div style="position:absolute;left:455px;top:167px;width:718px;height:1px;background:#aaa6a1"></div>
<div style="position:absolute;left:601px;top:149px;width:1px;height:17px;background:#d6d2cd"></div>
<div style="position:absolute;left:658px;top:149px;width:1px;height:17px;background:#d6d2cd"></div>
<div style="position:absolute;left:732px;top:149px;width:1px;height:17px;background:#d6d2cd"></div>
<div style="position:absolute;left:805px;top:149px;width:1px;height:17px;background:#d6d2cd"></div>
<div class="t" style="left:458px;top:150px;font-size:15px;line-height:15px;color:#141414;font-weight:normal;letter-spacing:0.419px;">Module</div>
<div class="t" style="left:604px;top:150px;font-size:15px;line-height:15px;color:#141414;font-weight:normal;">ID</div>
<div class="t" style="left:661px;top:150px;font-size:15px;line-height:15px;color:#141414;font-weight:normal;letter-spacing:0.094px;">Status</div>
<div class="t" style="left:735px;top:150px;font-size:15px;line-height:15px;color:#141414;font-weight:normal;letter-spacing:0.319px;">Host</div>
<div class="t" style="left:808px;top:150px;font-size:15px;line-height:15px;color:#141414;font-weight:normal;letter-spacing:0.117px;">Parameters</div>
<svg style="position:absolute;left:458px;top:169px" width="16" height="16" viewBox="0 0 16 16"><rect x="0.5" y="1" width="15" height="15" rx="3" fill="#8a2a08"/><rect x="0.5" y="0.5" width="15" height="14.8" rx="3" fill="#d03a0c"/><path d="M8 12 L12 8 L15.5 11.5 V12.3 Q15.5 15.3 12.5 15.3 H11.3Z" fill="#000" opacity="0.15"/><path d="M4.5 4.5 L11.5 11.5 M11.5 4.5 L4.5 11.5" stroke="#fff" stroke-width="2.4"/></svg>
<div class="t" style="left:480px;top:170px;font-size:15px;line-height:15px;color:#141414;font-weight:normal;letter-spacing:0.237px;">yarpdev</div>
<div class="t" style="left:605px;top:170px;font-size:15px;line-height:15px;color:#141414;font-weight:normal;">0</div>
<div class="t" style="left:662px;top:170px;font-size:15px;line-height:15px;color:#c8191f;font-weight:normal;letter-spacing:0.502px;">stopped</div>
<div class="t" style="left:736px;top:170px;font-size:15px;line-height:15px;color:#141414;font-weight:normal;letter-spacing:0.014px;">icub-head</div>
<div style="position:absolute;left:806px;top:167px;width:367px;height:19px;overflow:hidden"><div class="t" style="left:3px;top:3px;font-size:15px;line-height:15px;color:#141414;letter-spacing:0.026px">--name /icub/face/raw --device serial --subdevice serial</div></div>
<svg style="position:absolute;left:458px;top:188px" width="16" height="16" viewBox="0 0 16 16"><rect x="0.5" y="1" width="15" height="15" rx="3" fill="#8a2a08"/><rect x="0.5" y="0.5" width="15" height="14.8" rx="3" fill="#d03a0c"/><path d="M8 12 L12 8 L15.5 11.5 V12.3 Q15.5 15.3 12.5 15.3 H11.3Z" fill="#000" opacity="0.15"/><path d="M4.5 4.5 L11.5 11.5 M11.5 4.5 L4.5 11.5" stroke="#fff" stroke-width="2.4"/></svg>
<div class="t" style="left:480px;top:189px;font-size:15px;line-height:15px;color:#141414;font-weight:normal;letter-spacing:0.442px;">emotionInterface</div>
<div class="t" style="left:605px;top:189px;font-size:15px;line-height:15px;color:#141414;font-weight:normal;">1</div>
<div class="t" style="left:662px;top:189px;font-size:15px;line-height:15px;color:#c8191f;font-weight:normal;letter-spacing:0.502px;">stopped</div>
<div class="t" style="left:736px;top:189px;font-size:15px;line-height:15px;color:#141414;font-weight:normal;letter-spacing:0.014px;">icub-head</div>
<div style="position:absolute;left:806px;top:186px;width:367px;height:19px;overflow:hidden"><div class="t" style="left:3px;top:3px;font-size:15px;line-height:15px;color:#141414;letter-spacing:0.181px">--name /icub/face/emotions --context faceExpressions</div></div>
<div style="position:absolute;left:455px;top:383px;width:718px;height:14px;background:linear-gradient(#fdfcfb,#f1eeea)"></div>
<div style="position:absolute;left:455px;top:383px;width:718px;height:1px;background:#b3afaa"></div>
<div style="position:absolute;left:455px;top:396px;width:718px;height:1px;background:#d8d4cf"></div>
<div style="position:absolute;left:838px;top:384px;width:321px;height:12px;background:#e4e2de;border-left:1px solid #b3afaa;box-sizing:border-box"></div>
<div style="position:absolute;left:469px;top:384px;width:1px;height:12px;background:#b3afaa"></div>
<svg style="position:absolute;left:459px;top:387px" width="5" height="7" viewBox="0 0 5 7"><path d="M5 0 V7 L0 3.5Z" fill="#4a4a4a"/></svg>
<div style="position:absolute;left:1159px;top:384px;width:1px;height:12px;background:#b3afaa"></div>
<svg style="position:absolute;left:1164px;top:387px" width="5" height="7" viewBox="0 0 5 7"><path d="M0 0 V7 L5 3.5Z" fill="#4a4a4a"/></svg>
<svg style="position:absolute;left:809px;top:399px" width="18" height="3" viewBox="0 0 18 3"><rect x="0" y="0" width="1" height="1" fill="#b3afaa"/><rect x="3" y="0" width="1" height="1" fill="#b3afaa"/><rect x="6" y="0" width="1" height="1" fill="#b3afaa"/><rect x="9" y="0" width="1" height="1" fill="#b3afaa"/><rect x="12" y="0" width="1" height="1" fill="#b3afaa"/><rect x="15" y="0" width="1" height="1" fill="#b3afaa"/></svg>
<svg style="position:absolute;left:613px;top:482px" width="18" height="3" viewBox="0 0 18 3"><rect x="0" y="0" width="1" height="1" fill="#b3afaa"/><rect x="3" y="0" width="1" height="1" fill="#b3afaa"/><rect x="6" y="0" width="1" height="1" fill="#b3afaa"/><rect x="9" y="0" width="1" height="1" fill="#b3afaa"/><rect x="12" y="0" width="1" height="1" fill="#b3afaa"/><rect x="15" y="0" width="1" height="1" fill="#b3afaa"/></svg>
<svg style="position:absolute;left:452px;top:285px" width="3" height="18" viewBox="0 0 3 18"><rect x="0" y="0" width="1" height="1" fill="#b3afaa"/><rect x="0" y="3" width="1" height="1" fill="#b3afaa"/><rect x="0" y="6" width="1" height="1" fill="#b3afaa"/><rect x="0" y="9" width="1" height="1" fill="#b3afaa"/><rect x="0" y="12" width="1" height="1" fill="#b3afaa"/><rect x="0" y="15" width="1" height="1" fill="#b3afaa"/></svg>
<svg style="position:absolute;left:1176px;top:265px" width="3" height="18" viewBox="0 0 3 18"><rect x="0" y="0" width="1" height="1" fill="#b3afaa"/><rect x="0" y="3" width="1" height="1" fill="#b3afaa"/><rect x="0" y="6" width="1" height="1" fill="#b3afaa"/><rect x="0" y="9" width="1" height="1" fill="#b3afaa"/><rect x="0" y="12" width="1" height="1" fill="#b3afaa"/><rect x="0" y="15" width="1" height="1" fill="#b3afaa"/></svg>
<svg style="position:absolute;left:936px;top:429px" width="3" height="18" viewBox="0 0 3 18"><rect x="0" y="0" width="1" height="1" fill="#b3afaa"/><rect x="0" y="3" width="1" height="1" fill="#b3afaa"/><rect x="0" y="6" width="1" height="1" fill="#b3afaa"/><rect x="0" y="9" width="1" height="1" fill="#b3afaa"/><rect x="0" y="12" width="1" height="1" fill="#b3afaa"/><rect x="0" y="15" width="1" height="1" fill="#b3afaa"/></svg>
<div style="position:absolute;left:454px;top:402px;width:480px;height:68px;background:#fff"></div>
<div style="position:absolute;left:454px;top:402px;width:480px;height:20px;background:linear-gradient(#f8f6f4,#ebe8e4)"></div>
<div style="position:absolute;left:454px;top:422px;width:480px;height:1px;background:#aaa6a1"></div>
<div style="position:absolute;left:562px;top:404px;width:1px;height:17px;background:#d6d2cd"></div>
<div style="position:absolute;left:619px;top:404px;width:1px;height:17px;background:#d6d2cd"></div>
<div style="position:absolute;left:716px;top:404px;width:1px;height:17px;background:#d6d2cd"></div>
<div style="position:absolute;left:890px;top:404px;width:1px;height:17px;background:#d6d2cd"></div>
<div class="t" style="left:457px;top:405px;font-size:15px;line-height:15px;color:#141414;font-weight:normal;letter-spacing:0.234px;">Connection</div>
<div class="t" style="left:565px;top:405px;font-size:15px;line-height:15px;color:#141414;font-weight:normal;">ID</div>
<div class="t" style="left:622px;top:405px;font-size:15px;line-height:15px;color:#141414;font-weight:normal;letter-spacing:0.014px;">Status</div>
<div class="t" style="left:719px;top:405px;font-size:15px;line-height:15px;color:#141414;font-weight:normal;">From</div>
<div class="t" style="left:893px;top:405px;font-size:15px;line-height:15px;color:#141414;font-weight:normal;">To</div>
<svg style="position:absolute;left:458px;top:428px" width="14" height="14" viewBox="0 0 14 14"><path d="M1.2 3.1 L10.6 12.2" stroke="#ec3338" stroke-width="1.6"/><path d="M1.5 12.5 L3.8 10.2" stroke="#ec3338" stroke-width="2"/><path d="M3 9.6 L6.2 6.8 L8.4 9 L5.4 12Z" fill="#ec3338"/><path d="M6.3 5.4 L9 3 L11 5 L8.5 7.6Z" fill="#ec3338"/><path d="M10 4 L12.6 1.4" stroke="#ec3338" stroke-width="2.2"/></svg>
<div class="t" style="left:479px;top:428px;font-size:15px;line-height:15px;color:#141414;font-weight:normal;letter-spacing:0.422px;">Internal</div>
<div class="t" style="left:566px;top:428px;font-size:15px;line-height:15px;color:#141414;font-weight:normal;">0</div>
<div class="t" style="left:623px;top:428px;font-size:15px;line-height:15px;color:#c8191f;font-weight:normal;letter-spacing:0.145px;">disconnected</div>
<div class="t" style="left:720px;top:428px;font-size:15px;line-height:15px;color:#c8191f;font-weight:normal;letter-spacing:0.655px;">/icub/face/emotions/out</div>
<div class="t" style="left:894px;top:428px;font-size:15px;line-height:15px;color:#c8191f;font-weight:normal;letter-spacing:0.628px;">/icub/</div>
<div style="position:absolute;left:454px;top:456px;width:480px;height:14px;background:linear-gradient(#fdfcfb,#f1eeea)"></div>
<div style="position:absolute;left:454px;top:456px;width:480px;height:1px;background:#b3afaa"></div>
<div style="position:absolute;left:454px;top:469px;width:480px;height:1px;background:#d8d4cf"></div>
<div style="position:absolute;left:760px;top:457px;width:161px;height:12px;background:#e4e2de;border-left:1px solid #b3afaa;box-sizing:border-box"></div>
<div style="position:absolute;left:468px;top:457px;width:1px;height:12px;background:#b3afaa"></div>
<svg style="position:absolute;left:458px;top:460px" width="5" height="7" viewBox="0 0 5 7"><path d="M5 0 V7 L0 3.5Z" fill="#4a4a4a"/></svg>
<div style="position:absolute;left:920px;top:457px;width:1px;height:12px;background:#b3afaa"></div>
<svg style="position:absolute;left:925px;top:460px" width="5" height="7" viewBox="0 0 5 7"><path d="M0 0 V7 L5 3.5Z" fill="#4a4a4a"/></svg>
<div style="position:absolute;left:938px;top:402px;width:240px;height:68px;background:#fff"></div>
<div style="position:absolute;left:938px;top:402px;width:240px;height:20px;background:linear-gradient(#f8f6f4,#ebe8e4)"></div>
<div style="position:absolute;left:938px;top:422px;width:240px;height:1px;background:#aaa6a1"></div>
<div style="position:absolute;left:1032px;top:404px;width:1px;height:17px;background:#d6d2cd"></div>
<div style="position:absolute;left:1089px;top:404px;width:1px;height:17px;background:#d6d2cd"></div>
<div style="position:absolute;left:1162px;top:404px;width:1px;height:17px;background:#d6d2cd"></div>
<div class="t" style="left:940px;top:405px;font-size:15px;line-height:15px;color:#141414;font-weight:normal;letter-spacing:-0.172px;">Resource</div>
<div class="t" style="left:1035px;top:405px;font-size:15px;line-height:15px;color:#141414;font-weight:normal;">ID</div>
<div class="t" style="left:1093px;top:405px;font-size:15px;line-height:15px;color:#141414;font-weight:normal;">Type</div>
<div class="t" style="left:1164px;top:405px;font-size:15px;line-height:15px;color:#141414;font-weight:normal;">St</div>
<svg style="position:absolute;left:942px;top:426px" width="14" height="13" viewBox="0 0 14 13"><rect x="1.5" y="0.75" width="11" height="9" fill="#e3eed6" stroke="#8cc152" stroke-width="1.5"/><rect x="0" y="11.5" width="14" height="1.5" fill="#a6d27a"/></svg>
<div class="t" style="left:963px;top:425px;font-size:15px;line-height:15px;color:#141414;font-weight:normal;letter-spacing:-0.024px;">icub-head</div>
<div class="t" style="left:1036px;top:425px;font-size:15px;line-height:15px;color:#141414;font-weight:normal;">0</div>
<div class="t" style="left:1093px;top:425px;font-size:15px;line-height:15px;color:#141414;font-weight:normal;letter-spacing:0.493px;">computer</div>
<div style="position:absolute;left:1162px;top:423px;width:16px;height:30px;overflow:hidden"><div class="t" style="left:3px;top:2px;font-size:15px;line-height:15px;color:#3a9a2a">available</div></div>
<div style="position:absolute;left:938px;top:456px;width:240px;height:14px;background:linear-gradient(#fdfcfb,#f1eeea)"></div>
<div style="position:absolute;left:938px;top:456px;width:240px;height:1px;background:#b3afaa"></div>
<div style="position:absolute;left:938px;top:469px;width:240px;height:1px;background:#d8d4cf"></div>
<div style="position:absolute;left:1123px;top:457px;width:42px;height:12px;background:#e4e2de;border-left:1px solid #b3afaa;box-sizing:border-box"></div>
<div style="position:absolute;left:952px;top:457px;width:1px;height:12px;background:#b3afaa"></div>
<svg style="position:absolute;left:942px;top:460px" width="5" height="7" viewBox="0 0 5 7"><path d="M5 0 V7 L0 3.5Z" fill="#4a4a4a"/></svg>
<div style="position:absolute;left:1164px;top:457px;width:1px;height:12px;background:#b3afaa"></div>
<svg style="position:absolute;left:1169px;top:460px" width="5" height="7" viewBox="0 0 5 7"><path d="M0 0 V7 L5 3.5Z" fill="#4a4a4a"/></svg>
<div style="position:absolute;left:51px;top:485px;width:1138px;height:73px;background:#fff;border:1px solid #b9b5b0;box-sizing:border-box"></div>
<div style="position:absolute;left:53px;top:521px;width:1120px;height:17px;background:#308cc6"></div>
<div class="t" style="left:57px;top:488px;font-size:15px;line-height:15px;color:#141414;font-weight:normal;letter-spacing:0.024px;">[MSG] 10 applications are loaded successfully.</div>
<div class="t" style="left:57px;top:504px;font-size:15px;line-height:15px;color:#141414;font-weight:normal;letter-spacing:0.024px;">[MSG] 10 applications are loaded successfully.</div>
<div class="t" style="left:57px;top:521px;font-size:15px;line-height:15px;color:#fff;font-weight:normal;letter-spacing:0.024px;">[MSG] 10 applications are loaded successfully.</div>
<div style="position:absolute;left:1173px;top:486px;width:15px;height:56px;background:linear-gradient(90deg,#fdfcfb,#f1eeea);border-left:1px solid #d0ccc7;box-sizing:border-box"></div>
<div style="position:absolute;left:1174px;top:500px;width:14px;height:2px;background:#d6d2cd"></div>
<div style="position:absolute;left:1174px;top:528px;width:14px;height:1px;background:#d6d2cd"></div>
<svg style="position:absolute;left:1176px;top:491px" width="9" height="5" viewBox="0 0 9 5"><path d="M0 5 H9 L4.5 0Z" fill="#4a4a4a"/></svg>
<svg style="position:absolute;left:1176px;top:532px" width="9" height="5" viewBox="0 0 9 5"><path d="M0 0 H9 L4.5 5Z" fill="#4a4a4a"/></svg>
<div style="position:absolute;left:52px;top:542px;width:1121px;height:14px;background:linear-gradient(#fdfcfb,#f1eeea)"></div>
<div style="position:absolute;left:52px;top:542px;width:1121px;height:1px;background:#b3afaa"></div>
<div style="position:absolute;left:52px;top:555px;width:1121px;height:1px;background:#d8d4cf"></div>
<div style="position:absolute;left:1094px;top:543px;width:66px;height:12px;background:#e4e2de;border-left:1px solid #b3afaa;box-sizing:border-box"></div>
<div style="position:absolute;left:66px;top:543px;width:1px;height:12px;background:#b3afaa"></div>
<svg style="position:absolute;left:56px;top:546px" width="5" height="7" viewBox="0 0 5 7"><path d="M5 0 V7 L0 3.5Z" fill="#4a4a4a"/></svg>
<div style="position:absolute;left:1159px;top:543px;width:1px;height:12px;background:#b3afaa"></div>
<svg style="position:absolute;left:1164px;top:546px" width="5" height="7" viewBox="0 0 5 7"><path d="M0 0 V7 L5 3.5Z" fill="#4a4a4a"/></svg>
<div style="position:absolute;left:1173px;top:542px;width:15px;height:15px;background:#f1eeea;border-top:1px solid #d0ccc7;border-left:1px solid #d0ccc7;box-sizing:border-box"></div>
<div style="position:absolute;left:51px;top:557px;width:92px;height:27px;background:#fbfaf8;border:1px solid #b9b5b0;border-top:none;border-radius:0 0 3px 3px;box-sizing:border-box"></div>
<div style="position:absolute;left:142px;top:557px;width:66px;height:25px;background:linear-gradient(#e9e6e2,#e4e1dd);border:1px solid #b9b5b0;border-top:none;border-radius:0 0 3px 3px;box-sizing:border-box"></div>
<div style="position:absolute;left:52px;top:557px;width:90px;height:1px;background:#fbfaf8"></div>
<div class="t" style="left:64px;top:563px;font-size:15px;line-height:15px;color:#141414;font-weight:normal;letter-spacing:-0.339px;">Messages</div>
<div class="t" style="left:154px;top:561px;font-size:15px;line-height:15px;color:#141414;font-weight:normal;letter-spacing:0.453px;">Notes</div>
<div class="t" style="left:1059px;top:607px;font-size:15px;line-height:15px;color:#141414;font-weight:normal;letter-spacing:0.087px;">Powered by</div>
<svg style="position:absolute;left:1146px;top:598px" width="30" height="32" viewBox="0 0 30 32">
<rect x="3" y="1" width="24" height="20" fill="#1dbfd6"/>
<rect x="3" y="21" width="24" height="2" fill="#4fd0e2"/>
<rect x="0" y="8" width="3" height="7" fill="#17a2b4"/><rect x="27" y="8" width="3" height="7" fill="#17a2b4"/>
<rect x="7" y="4" width="5" height="7" fill="#e6f7fa"/><rect x="8" y="5" width="3" height="4" fill="#0f7f8f"/>
<rect x="18" y="4" width="5" height="7" fill="#e6f7fa"/><rect x="19" y="5" width="3" height="4" fill="#0f7f8f"/>
<rect x="8" y="15" width="14" height="4" fill="#bdeef5"/><rect x="9" y="15" width="12" height="2" fill="#fff"/>
<rect x="3" y="23" width="7" height="5" fill="#1dbfd6"/><rect x="20" y="23" width="7" height="5" fill="#1dbfd6"/>
<rect x="3" y="28" width="7" height="3" fill="#118fa0"/><rect x="20" y="28" width="7" height="3" fill="#118fa0"/>
</svg>
<svg style="position:absolute;left:1186px;top:617px" width="14" height="14" viewBox="0 0 14 14"><rect x="2" y="11" width="1.2" height="1.2" fill="#a9a5a0"/><rect x="5" y="8" width="1.2" height="1.2" fill="#a9a5a0"/><rect x="5" y="11" width="1.2" height="1.2" fill="#a9a5a0"/><rect x="8" y="5" width="1.2" height="1.2" fill="#a9a5a0"/><rect x="8" y="8" width="1.2" height="1.2" fill="#a9a5a0"/><rect x="8" y="11" width="1.2" height="1.2" fill="#a9a5a0"/><rect x="11" y="2" width="1.2" height="1.2" fill="#a9a5a0"/><rect x="11" y="5" width="1.2" height="1.2" fill="#a9a5a0"/><rect x="11" y="8" width="1.2" height="1.2" fill="#a9a5a0"/><rect x="11" y="11" width="1.2" height="1.2" fill="#a9a5a0"/></svg>
</body></html>
